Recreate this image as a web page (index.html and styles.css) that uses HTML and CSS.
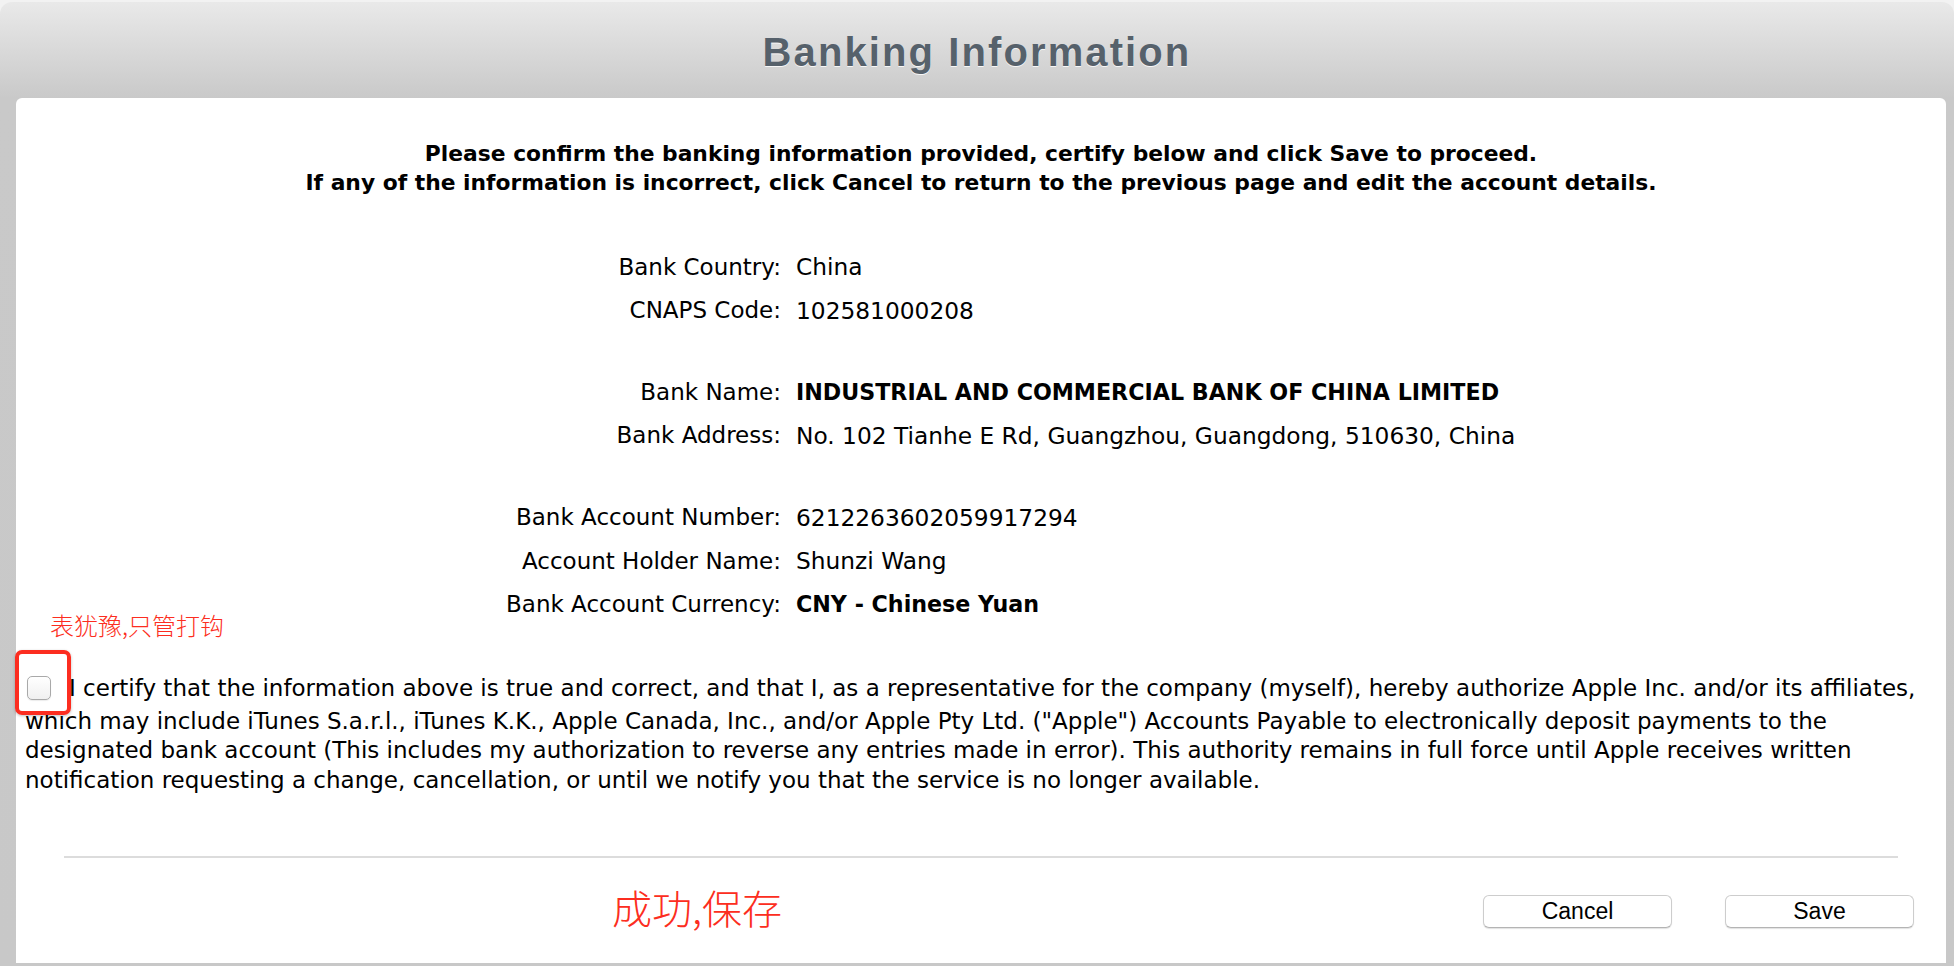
FILE: index.html
```html
<!DOCTYPE html>
<html lang="en">
<head>
<meta charset="utf-8">
<title>Banking Information</title>
<link rel="stylesheet" href="styles.css">
</head>
<body>
<div class="window">
  <header class="header">
    <h1 class="title">Banking Information</h1>
  </header>
  <main class="panel">
    <div class="intro">
      <p>Please confirm the banking information provided, certify below and click Save to proceed.</p>
      <p>If any of the information is incorrect, click Cancel to return to the previous page and edit the account details.</p>
    </div>

    <div class="details">
      <div class="group">
        <div class="label">Bank Country:</div><div class="value">China</div>
        <div class="label">CNAPS Code:</div><div class="value">102581000208</div>
      </div>
      <div class="group">
        <div class="label">Bank Name:</div><div class="value strong">INDUSTRIAL AND COMMERCIAL BANK OF CHINA LIMITED</div>
        <div class="label">Bank Address:</div><div class="value">No. 102 Tianhe E Rd, Guangzhou, Guangdong, 510630, China</div>
      </div>
      <div class="group">
        <div class="label">Bank Account Number:</div><div class="value">6212263602059917294</div>
        <div class="label">Account Holder Name:</div><div class="value">Shunzi Wang</div>
        <div class="label">Bank Account Currency:</div><div class="value strong">CNY - Chinese Yuan</div>
      </div>
    </div>

    <p class="certify"><span class="checkbox"></span>I certify that the information above is true and correct, and that I, as a representative for the company (myself), hereby authorize Apple Inc. and/or its affiliates, which may include iTunes S.a.r.l., iTunes K.K., Apple Canada, Inc., and/or Apple Pty Ltd. ("Apple") Accounts Payable to electronically deposit payments to the designated bank account (This includes my authorization to reverse any entries made in error). This authority remains in full force until Apple receives written notification requesting a change, cancellation, or until we notify you that the service is no longer available.</p>

    <hr class="divider">

    <div class="actions">
      <button class="btn" type="button">Cancel</button>
      <button class="btn" type="button">Save</button>
    </div>

    <span class="note note-check">表犹豫,只管打钩</span>
    <span class="mark-box"></span>
    <span class="note note-save">成功,保存</span>
  </main>
</div>
</body>
</html>
```
FILE: styles.css
```css
html, body {
  margin: 0;
  padding: 0;
}
body {
  background: #f2f2f2;
  font-family: "DejaVu Sans", "Noto Sans CJK SC", sans-serif;
  color: #000;
  width: 1954px;
  height: 966px;
  overflow: hidden;
}
.window {
  margin-top: 2px;
  height: 964px;
  box-sizing: border-box;
  padding: 0 8px 3px 16px;
  display: flex;
  flex-direction: column;
  border-radius: 12px 12px 0 0;
  background: linear-gradient(#e9e9e9 0, #c9c9c9 96px, #c8c8c8 100%);
}
.header {
  height: 96px;
  box-sizing: border-box;
  padding-top: 27px;
  margin-left: -16px;
  margin-right: -8px;
  text-align: center;
}
.title {
  margin: 0;
  font-family: "Liberation Sans", Arial, sans-serif;
  font-weight: bold;
  font-size: 40px;
  line-height: 46px;
  letter-spacing: 2.1px;
  color: #56616b;
  text-shadow: 0 1px 0 #f7f7f7;
}
.panel {
  position: relative;
  flex: 1;
  background: #fff;
  border-radius: 6px 6px 0 0;
  display: flex;
  flex-direction: column;
}
.intro {
  padding-top: 42px;
  text-align: center;
  font-weight: bold;
  font-size: 21.8px;
  line-height: 28.5px;
}
.intro p {
  margin: 0;
}
.details {
  margin-top: 48px;
  font-size: 23px;
}
.group {
  display: grid;
  grid-template-columns: 765px 1fr;
  column-gap: 15px;
  grid-auto-rows: 43.4px;
  align-items: center;
}
.group + .group {
  margin-top: 38.6px;
}
.label {
  text-align: right;
}
.value {
  font-size: 23.3px;
}
.value.strong {
  font-weight: bold;
  font-size: 22.2px;
}
.certify {
  margin: 48px 0 0;
  padding: 0 8px 0 9px;
  font-size: 23px;
  line-height: 29.5px;
}
.checkbox {
  display: inline-block;
  width: 24px;
  height: 24px;
  box-sizing: border-box;
  margin: 0 18px 7px 2px;
  vertical-align: -11px;
  border: 1px solid #a9a9a9;
  border-radius: 5px;
  background: linear-gradient(#ffffff, #f0f0f0);
  box-shadow: 0 1px 1px rgba(0, 0, 0, 0.08);
}
.divider {
  margin: 61px 48px 0;
  height: 2px;
  border: 0;
  background: #dcdcdc;
}
.actions {
  margin-top: 37px;
  display: flex;
  justify-content: flex-end;
  gap: 53px;
  padding-right: 32px;
}
.btn {
  width: 189px;
  height: 33px;
  padding: 0;
  font-family: "Liberation Sans", Arial, sans-serif;
  font-size: 23px;
  color: #000;
  background: #fff;
  border: 1px solid #cdcdcd;
  border-bottom-color: #b4b4b4;
  border-radius: 6px;
  box-shadow: 0 1px 1px rgba(0, 0, 0, 0.12);
}
.note {
  position: absolute;
  color: #fc2d20;
  font-family: "Noto Sans CJK SC", sans-serif;
  font-weight: 300;
  white-space: nowrap;
}
.note-check {
  left: 34px;
  top: 511px;
  font-size: 24px;
  line-height: 32px;
}
.note-save {
  left: 596px;
  top: 785px;
  font-size: 40px;
  line-height: 48px;
}
.mark-box {
  position: absolute;
  left: -1px;
  top: 552px;
  width: 56px;
  height: 65px;
  box-sizing: border-box;
  border: 4px solid #fc2d20;
  border-radius: 7px;
  box-shadow: 0 1px 3px rgba(0, 0, 0, 0.25);
}
```
